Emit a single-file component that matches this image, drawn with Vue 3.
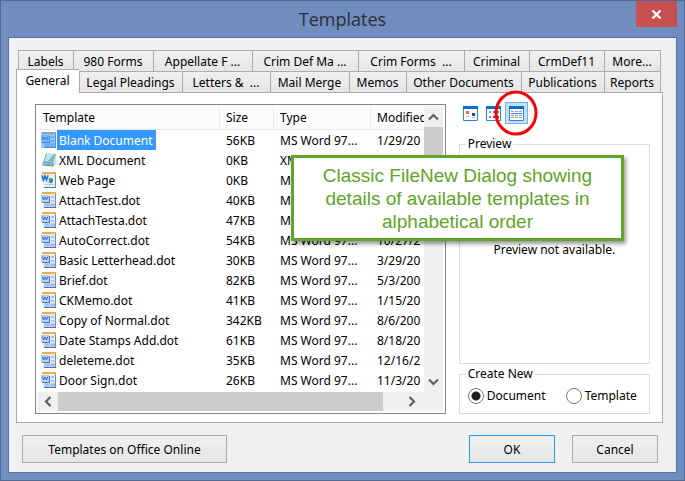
<script setup>
import { ref } from 'vue'

const backTabs = ['Labels', '980 Forms', 'Appellate F ...', 'Crim Def Ma ...', 'Crim Forms\u00a0 ...', 'Criminal', 'CrmDef11', 'More...']
const frontTabs = ['General', 'Legal Pleadings', 'Letters &\u00a0 ...', 'Mail Merge', 'Memos', 'Other Documents', 'Publications', 'Reports']
const active = ref('General')

const word = 'MS Word 97...'
const files = [
  { name: 'Blank Document', size: '56KB', type: word, date: '1/29/20', icon: 'doc' },
  { name: 'XML Document', size: '0KB', type: 'XML Docu...', date: '', icon: 'xml' },
  { name: 'Web Page', size: '0KB', type: word, date: '', icon: 'web' },
  { name: 'AttachTest.dot', size: '40KB', type: word, date: '', icon: 'doc' },
  { name: 'AttachTesta.dot', size: '47KB', type: word, date: '', icon: 'doc' },
  { name: 'AutoCorrect.dot', size: '54KB', type: word, date: '10/27/2', icon: 'doc' },
  { name: 'Basic Letterhead.dot', size: '30KB', type: word, date: '3/29/20', icon: 'doc' },
  { name: 'Brief.dot', size: '82KB', type: word, date: '5/3/200', icon: 'doc' },
  { name: 'CKMemo.dot', size: '41KB', type: word, date: '1/15/20', icon: 'doc' },
  { name: 'Copy of Normal.dot', size: '342KB', type: word, date: '8/6/200', icon: 'doc' },
  { name: 'Date Stamps Add.dot', size: '61KB', type: word, date: '8/18/20', icon: 'doc' },
  { name: 'deleteme.dot', size: '35KB', type: word, date: '12/16/2', icon: 'doc' },
  { name: 'Door Sign.dot', size: '26KB', type: word, date: '11/3/20', icon: 'doc' }
]
const selected = ref('Blank Document')
const createNew = ref('document')
</script>

<template>
  <div class="window">
    <header class="titlebar">
      <h1>Templates</h1>
      <button class="close" type="button" aria-label="Close">
        <svg width="11" height="9" viewBox="0 0 11 9"><path d="M1.5 .5 9.5 8.5M9.5 .5 1.5 8.5" stroke="#fff" stroke-width="2.2" /></svg>
      </button>
    </header>

    <main class="client">
      <div class="tabs back" role="tablist">
        <button v-for="t in backTabs" :key="t" type="button" role="tab" class="tab">{{ t }}</button>
      </div>
      <div class="tabs front" role="tablist">
        <button v-for="t in frontTabs" :key="t" type="button" role="tab" class="tab" :class="{ active: t === active }" :aria-selected="t === active" @click="active = t">{{ t }}</button>
      </div>

      <section class="page">
        <div class="list">
          <div class="viewport">
            <table>
              <colgroup><col class="c-name"><col class="c-size"><col class="c-type"><col></colgroup>
              <thead>
                <tr><th>Template</th><th>Size</th><th>Type</th><th>Modified</th></tr>
              </thead>
              <tbody>
                <tr v-for="f in files" :key="f.name" :class="{ selected: f.name === selected }" @click="selected = f.name">
                  <td class="name">
                    <div class="file">
                      <svg v-if="f.icon === 'xml'" class="icon" viewBox="0 0 16 16">
                        <path d="M5 1.5 15 2 11.5 13.5 1 12.5Z" fill="#79bcc4" />
                        <path d="M6 2 13 2 7 9 3.5 9Z" fill="#bfe6e6" />
                        <path d="M1 12.5 11.5 13.5 13 10 12.5 14.5 2 13.5Z" fill="#3f7f8d" />
                        <path d="M12.5 13.5 15 3V12L13 14.5Z" fill="#c9dde6" />
                      </svg>
                      <svg v-else class="icon" viewBox="0 0 16 16">
                        <path d="M2 1H15V15H2Z" fill="#e6effd" />
                        <path d="M1 0H15V2H1Z" fill="#f6ab45" />
                        <path d="M14 2H15V15H14Z" fill="#6f88b8" />
                        <path d="M3 15H15V16H3Z" fill="#5f719f" />
                        <template v-if="f.icon === 'doc'">
                          <path d="M3 11H14V15H3Z" fill="#b7cef5" />
                          <path d="M10 4H13V6H10ZM10 8H13V10H10ZM4 12H8V14H4ZM10 12H13V14H10Z" fill="#a1bff0" />
                          <path d="M1 4H9V11H1Z" fill="#4f77bf" />
                          <path d="M0 3H8V10H0Z" fill="#b9cff5" />
                          <path d="M1.5 4.5 2.5 8 4 5 5.5 8 7 4.5" fill="none" stroke="#4068b8" />
                        </template>
                        <template v-else>
                          <path d="M4 12.5H13" stroke="#b7c7df" />
                          <circle cx="9.5" cy="8.5" r="2.5" fill="#418bd0" />
                          <path d="M9 7 12 7.5 11 11 9 10Z" fill="#399a40" />
                          <path d="M0 2H8V10H0Z" fill="#dcebfc" />
                          <path d="M1 3.5 2.5 8 4 4 5.5 8 7 3.5" fill="none" stroke="#1f6fc6" stroke-width="1.5" />
                        </template>
                        <path v-if="f.name === selected" d="M0 0H15V16H0Z" fill="#3399ff" fill-opacity=".5" />
                      </svg>
                      <span class="label">{{ f.name }}</span>
                    </div>
                  </td>
                  <td>{{ f.size }}</td>
                  <td>{{ f.type }}</td>
                  <td>{{ f.date }}</td>
                </tr>
              </tbody>
            </table>
          </div>
          <div class="vscroll">
            <button type="button" class="arrow" aria-label="Scroll up"><svg width="11" height="8" viewBox="0 0 11 8"><path d="M1 6.5 5.5 2 10 6.5" /></svg></button>
            <div class="thumb"></div>
            <button type="button" class="arrow" aria-label="Scroll down"><svg width="11" height="8" viewBox="0 0 11 8"><path d="M1 1.5 5.5 6 10 1.5" /></svg></button>
          </div>
          <div class="hscroll">
            <button type="button" class="arrow" aria-label="Scroll left"><svg width="8" height="11" viewBox="0 0 8 11"><path d="M6.5 1 2 5.5 6.5 10" /></svg></button>
            <div class="thumb"></div>
            <button type="button" class="arrow" aria-label="Scroll right"><svg width="8" height="11" viewBox="0 0 8 11"><path d="M1.5 1 6 5.5 1.5 10" /></svg></button>
          </div>
        </div>

        <aside class="side">
          <div class="views">
            <button type="button" class="view" aria-label="Large icons">
              <svg width="15" height="15" viewBox="0 0 15 15">
                <path d="M.5 1V14.5H14.5V1" fill="#fff" stroke="#2a86dc" /><path d="M0 0H15V3H0Z" fill="#0a6ed1" />
                <path d="M3 5H6V8H3Z" fill="#f26a3d" /><path d="M9 7H12V10H9Z" fill="#1646a0" /><path d="M3 10.5H6M9 11.5H12" stroke="#b5b5b5" />
              </svg>
            </button>
            <button type="button" class="view" aria-label="List">
              <svg width="15" height="15" viewBox="0 0 15 15">
                <path d="M.5 1V14.5H14.5V1" fill="#fff" stroke="#2a86dc" /><path d="M0 0H15V3H0Z" fill="#0a6ed1" />
                <path d="M3 5H5V7H3Z" fill="#8d9bb8" /><path d="M7 5H9V7H7Z" fill="#4a72b8" /><path d="M11 5H13V7H11Z" fill="#4b9448" />
                <path d="M3 10H5V12H3Z" fill="#f26a3d" /><path d="M7 10H9V12H7Z" fill="#c52c3a" /><path d="M11 10H13V12H11Z" fill="#1646a0" />
              </svg>
            </button>
            <button type="button" class="view pressed" aria-label="Details" aria-pressed="true">
              <svg width="15" height="15" viewBox="0 0 15 15">
                <path d="M.5 1V14.5H14.5V1" fill="#fff" stroke="#2a86dc" /><path d="M0 0H15V3H0Z" fill="#0a6ed1" />
                <path d="M2 5.5H13M2 9.5H13M2 11.5H13" stroke="#a2a2a2" stroke-dasharray="3 1" />
                <path d="M2 7.5H13" stroke="#2a86dc" />
              </svg>
              <svg class="ring" width="44" height="46" viewBox="0 0 44 46"><ellipse cx="22" cy="23" rx="20" ry="21" fill="none" stroke="#fa0000" stroke-width="3" /></svg>
            </button>
          </div>
          <fieldset class="preview">
            <legend>Preview</legend>
            <p>Preview not available.</p>
          </fieldset>
          <fieldset class="create">
            <legend>Create New</legend>
            <div class="choices">
              <label><input v-model="createNew" type="radio" name="create" value="document">Document</label>
              <label><input v-model="createNew" type="radio" name="create" value="template">Template</label>
            </div>
          </fieldset>
        </aside>
      </section>

      <footer class="actions">
        <button type="button" class="push wide">Templates on Office Online</button>
        <button type="button" class="push default">OK</button>
        <button type="button" class="push">Cancel</button>
      </footer>
    </main>

    <div class="callout">Classic FileNew Dialog showing details of available templates in alphabetical order</div>
  </div>
</template>

<style>
body { margin: 0; }
</style>

<style scoped>
.window, .window * { box-sizing: border-box; }
.window {
  position: relative;
  padding: 0 7px 7px;
  border: 1px solid #566b94;
  background: #6f8dbe;
  color: #000;
  font: 12px/18px "Noto Sans", sans-serif;
}
button {
  margin: 0;
  padding: 0;
  border: 0;
  background: none;
  color: inherit;
  font: inherit;
  white-space: nowrap;
}
svg { display: block; flex: none; }

.titlebar {
  display: grid;
  grid-template-columns: 1fr auto 1fr;
  height: 36px;
}
.titlebar h1 {
  grid-column: 2;
  margin: 0;
  color: #2c2f36;
  font: 18px/36px "Open Sans", sans-serif;
}
.close {
  display: flex;
  align-items: center;
  justify-content: center;
  justify-self: end;
  width: 41px;
  height: 26px;
  background: #c75050;
}

.client {
  padding: 12px 13px 9px 7px;
  border: 1px solid #5872a3;
  background: #f0f0f0;
}
.tabs { display: grid; }
.tabs.back {
  grid-template-columns: 55fr 80fr 99fr 106fr 106fr 65fr 75fr 57fr;
  padding: 0 2px;
}
.tabs.front { grid-template-columns: 63fr 103fr 88fr 79fr 57fr 115fr 83fr 57fr; padding-right: 2px; }
.tab {
  height: 21px;
  padding: 1px 1px 0 0;
  border: 1px solid #acacac;
  border-width: 1px 0 0 1px;
  background: linear-gradient(#f0f0f0, #e6e6e6);
  overflow: hidden;
}
.tab:last-child { border-right-width: 1px; }
.tab.active {
  position: relative;
  height: 24px;
  margin: -2px 0 -1px;
  padding-bottom: 2px;
  background: #fff;
}

.page {
  display: grid;
  grid-template-columns: minmax(0, 410fr) minmax(0, 191fr);
  gap: 13px;
  padding: 11px 12px 8px 18px;
  border: 1px solid #acacac;
  background: #fff;
}
.list {
  display: grid;
  grid-template-columns: minmax(0, 1fr) 19px;
  grid-template-rows: 1fr 19px;
  padding: 1px 2px 2px 1px;
  border: 1px solid #828790;
}
.viewport { overflow: hidden; padding-bottom: 2px; }
table {
  width: 100%;
  table-layout: fixed;
  border-collapse: separate;
  border-spacing: 0;
}
.c-name { width: 183px; }
.c-size { width: 54px; }
.c-type { width: 97px; }
th {
  height: 24px;
  padding: 1px 0 0 6px;
  border-right: 1px solid #e3ecf7;
  border-bottom: 1px solid #e3ecf7;
  background: #fcfcfc;
  font-weight: 400;
  text-align: left;
  white-space: nowrap;
  overflow: hidden;
}
th:last-child { border-right: 0; }
td {
  height: 20px;
  padding: 2px 0 0 6px;
  white-space: nowrap;
  overflow: hidden;
}
.name { padding: 0 0 0 4px; }
.file { display: flex; align-items: center; }
.icon { width: 16px; height: 16px; }
.label { padding: 2px 3px 0 2px; }
.selected .label { background: #3399ff; color: #fff; }

.vscroll, .hscroll { display: flex; background: #f0f0f0; }
.vscroll { flex-direction: column; }
.hscroll { grid-column: 1 / 3; }
.arrow {
  display: flex;
  align-items: center;
  justify-content: center;
  width: 21px;
  height: 21px;
}
.vscroll .arrow { width: 19px; }
.hscroll .arrow { height: 19px; }
.arrow path { fill: none; stroke: #606060; stroke-width: 2.2; }
.thumb { background: #cdcdcd; }
.vscroll .thumb { height: 60px; margin-bottom: auto; }
.hscroll .thumb { width: 80%; margin-right: auto; }
.hscroll .arrow:last-child { margin-right: 20px; }

.side { display: flex; flex-direction: column; }
.views {
  display: flex;
  height: 22px;
  margin: -2px 0 11px;
}
.view {
  position: relative;
  display: flex;
  align-items: center;
  justify-content: center;
  width: 23px;
  height: 22px;
}
.view.pressed { border: 1px solid #6fb0ee; background: #c2dffb; }
.ring { position: absolute; left: -12px; top: -13px; }
fieldset {
  min-width: 0;
  margin: 0;
  padding: 0;
  border: 1px solid #dcdcdc;
}
legend { margin-left: 6px; padding: 0 2px; }
.preview { flex: 1; margin-bottom: 1px; }
.preview p { margin: 88px 0 0; text-align: center; }
.create { height: 49px; }
.choices { display: flex; padding-left: 8px; }
.choices label {
  display: flex;
  flex: none;
  align-items: center;
  gap: 3px;
  width: 98px;
  height: 26px;
}
.choices label:last-child { width: auto; }
.choices input {
  appearance: none;
  flex: none;
  width: 16px;
  height: 16px;
  margin: 0;
  border: 1px solid #777;
  border-radius: 50%;
  background: #fff;
}
.choices input:checked { background: radial-gradient(circle, #222 4px, #fff 5px); }

.actions {
  display: flex;
  gap: 17px;
  margin-top: 12px;
  padding: 0 5px 0 6px;
}
.push {
  width: 86px;
  height: 28px;
  padding-top: 1px;
  border: 1px solid #acacac;
  background: linear-gradient(#f0f0f0, #e5e5e5);
}
.push.wide { width: 205px; margin-right: auto; }
.push.default { border-color: #3399ff; }

.callout {
  position: absolute;
  left: 290px;
  top: 154px;
  width: 333px;
  padding: 6px 20px 5px;
  border: 3px solid #5ea528;
  background: #fff;
  box-shadow: 2px 3px 4px rgba(0, 0, 0, 0.4);
  color: #5ea528;
  font: 19px/23px "Liberation Sans", Arial, sans-serif;
  text-align: center;
}
</style>
